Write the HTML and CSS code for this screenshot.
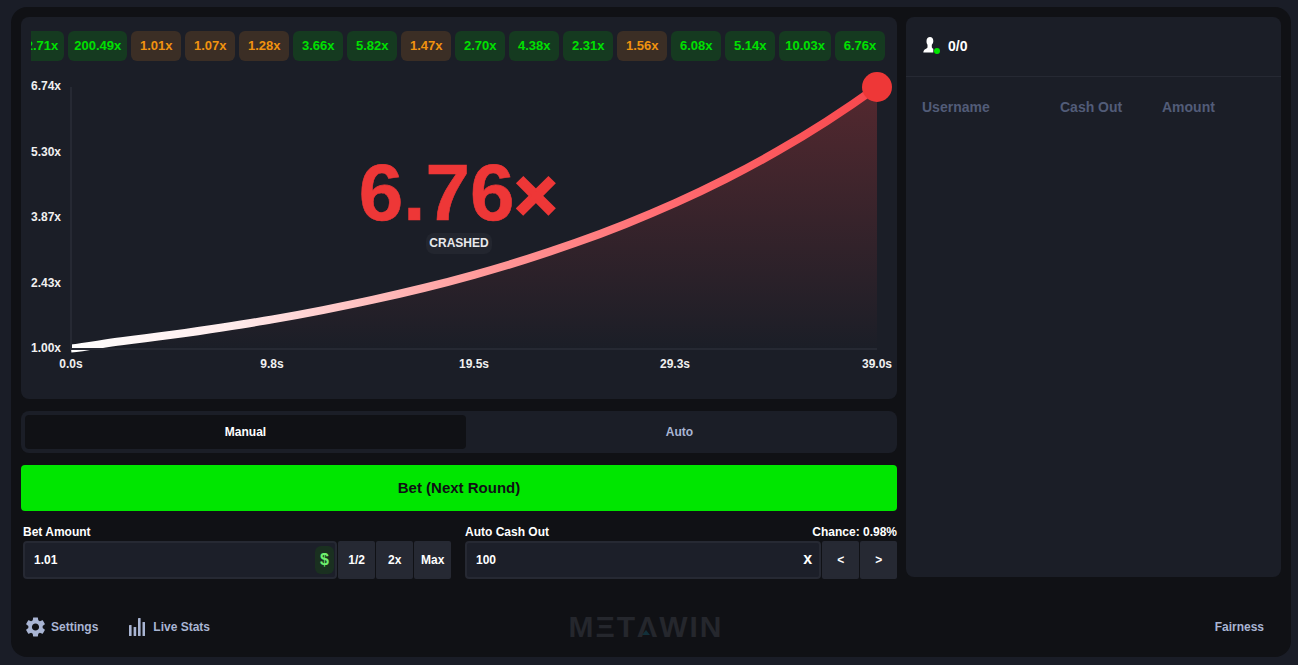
FILE: index.html
```html
<!DOCTYPE html>
<html lang="en">
<head>
  <meta charset="UTF-8" />
  <title>Crash</title>
  <meta name="viewport" content="width=device-width, initial-scale=1.0" />
  <link rel="stylesheet" href="styles.css">
</head>
<body>
  <div class="shell">
    <div class="main">
      <div class="game">
        <div class="chart">
          <div class="history">
            <div class="chip win">2.71x</div>
            <div class="chip win">200.49x</div>
            <div class="chip low">1.01x</div>
            <div class="chip low">1.07x</div>
            <div class="chip low">1.28x</div>
            <div class="chip win">3.66x</div>
            <div class="chip win">5.82x</div>
            <div class="chip low">1.47x</div>
            <div class="chip win">2.70x</div>
            <div class="chip win">4.38x</div>
            <div class="chip win">2.31x</div>
            <div class="chip low">1.56x</div>
            <div class="chip win">6.08x</div>
            <div class="chip win">5.14x</div>
            <div class="chip win">10.03x</div>
            <div class="chip win">6.76x</div>
          </div>

          <!-- viewBox uses the page coordinates of the chart area -->
          <svg class="plot" viewBox="21 71 876 328" width="876" height="328">
            <defs>
              <linearGradient id="area" gradientUnits="userSpaceOnUse" x1="0" y1="87" x2="0" y2="349">
                <stop offset="0" stop-color="#ef4444" stop-opacity="0.27" />
                <stop offset="1" stop-color="#ef4444" stop-opacity="0" />
              </linearGradient>
              <linearGradient id="line" gradientUnits="userSpaceOnUse" x1="71" y1="0" x2="877" y2="0">
                <stop offset="0" stop-color="#ffffff" />
                <stop offset="0.2" stop-color="#ffecec" />
                <stop offset="0.5" stop-color="#ff9c9c" />
                <stop offset="0.75" stop-color="#ff6a6f" />
                <stop offset="1" stop-color="#f8474c" />
              </linearGradient>
            </defs>
            <path class="area" d="M71 349V348.5C87.8 346.7 104.600 343.3 121.4 341.3S155 337.1 171.8 334.8 205.3 330.1 222.1 327.5 255.7 322.3 272.5 319.4 306.1 313.4 322.9 310.1 356.5 303.4 373.3 299.7 406.8 292.1 423.6 288 457.2 279.5 474 274.8 507.6 265.2 524.4 259.9 558 249 574.8 243.1 608.3 230.9 625.1 224.2 658.7 210.4 675.5 202.9 709.1 187.4 725.9 178.9 759.5 161.4 776.3 151.8 809.8 132.1 826.6 121.3 860.2 99.1 877 87V349Z" />
            <path class="curve" d="M71 348.5C87.8 346.7 104.600 343.3 121.4 341.3S155 337.1 171.8 334.8 205.3 330.1 222.1 327.5 255.7 322.3 272.5 319.4 306.1 313.4 322.9 310.1 356.5 303.4 373.3 299.7 406.8 292.1 423.6 288 457.2 279.5 474 274.8 507.6 265.2 524.4 259.9 558 249 574.8 243.1 608.3 230.9 625.1 224.2 658.7 210.4 675.5 202.9 709.1 187.4 725.9 178.9 759.5 161.4 776.3 151.8 809.8 132.1 826.6 121.3 860.2 99.1 877 87" />
            <path class="axis" d="M71 87V349H877" />
            <circle class="dot" cx="877" cy="87" r="15" />
            <g class="ticks-y">
              <text x="61" y="90">6.74x</text>
              <text x="61" y="156">5.30x</text>
              <text x="61" y="221">3.87x</text>
              <text x="61" y="287">2.43x</text>
              <text x="61" y="352">1.00x</text>
            </g>
            <g class="ticks-x">
              <text x="71" y="368">0.0s</text>
              <text x="272" y="368">9.8s</text>
              <text x="474" y="368">19.5s</text>
              <text x="675" y="368">29.3s</text>
              <text x="877" y="368">39.0s</text>
            </g>
          </svg>

          <div class="result">
            <div class="multiplier">6.76<span class="times">×</span></div>
            <div class="status">CRASHED</div>
          </div>
        </div>

        <div class="tabs">
          <div class="tab active">Manual</div>
          <div class="tab">Auto</div>
        </div>

        <button class="bet-btn">Bet (Next Round)</button>

        <div class="fields">
          <div class="field">
            <div class="field-label"><span>Bet Amount</span></div>
            <div class="field-row">
              <div class="input">
                <span>1.01</span>
                <span class="coin">$</span>
              </div>
              <button class="mini">1/2</button>
              <button class="mini">2x</button>
              <button class="mini">Max</button>
            </div>
          </div>
          <div class="field">
            <div class="field-label"><span>Auto Cash Out</span><span>Chance: 0.98%</span></div>
            <div class="field-row">
              <div class="input">
                <span>100</span>
                <span class="suffix">x</span>
              </div>
              <button class="mini">&lt;</button>
              <button class="mini">&gt;</button>
            </div>
          </div>
        </div>
      </div>

      <div class="players">
        <div class="players-head">
          <svg class="user-icon" viewBox="0 0 18 18" width="18" height="18">
            <path d="M7 0c2 0 3.300 1.700 3.300 3.900 0 1.600-.7 3-1.500 3.800v2.300c0 .8.7 1.300 1.500 1.800v3.700H.3c0-1.600.9-2.800 2.300-3.500 1-.5 1.900-1 1.900-2V7.700C3.800 6.900 3.500 5.500 3.500 3.900 3.500 1.700 5 0 7 0z" />
            <circle cx="14" cy="14" r="3" />
          </svg>
          <span>0/0</span>
        </div>
        <div class="players-cols">
          <span>Username</span>
          <span>Cash Out</span>
          <span>Amount</span>
        </div>
      </div>
    </div>

    <div class="footer">
      <div class="footer-left">
        <div class="footer-link">
          <svg viewBox="2.500 2 19 20" width="19" height="20">
            <path d="M19.14 12.94c.04-.3.06-.61.06-.94 0-.32-.02-.64-.07-.94l2.03-1.58c.18-.14.23-.41.12-.61l-1.92-3.32c-.12-.22-.37-.29-.59-.22l-2.39.96c-.5-.38-1.03-.7-1.62-.94l-.36-2.54c-.04-.24-.24-.41-.48-.41h-3.84c-.24 0-.43.17-.47.41l-.36 2.54c-.59.24-1.13.57-1.62.94l-2.39-.96c-.22-.08-.47 0-.59.22L2.74 8.87c-.12.21-.08.47.12.61l2.03 1.58c-.05.3-.09.63-.09.94s.02.64.07.94l-2.03 1.58c-.18.14-.23.41-.12.61l1.92 3.32c.12.22.37.29.59.22l2.39-.96c.5.38 1.03.7 1.62.94l.36 2.54c.05.24.24.41.48.41h3.84c.24 0 .44-.17.47-.41l.36-2.54c.59-.24 1.13-.56 1.62-.94l2.39.96c.22.08.47 0 .59-.22l1.92-3.32c.12-.22.07-.47-.12-.61l-2.01-1.58zM12 15.6c-1.98 0-3.6-1.62-3.6-3.6s1.62-3.6 3.6-3.6 3.6 1.62 3.6 3.6-1.62 3.6-3.6 3.6z" />
          </svg>
          <span>Settings</span>
        </div>
        <div class="footer-link">
          <svg viewBox="0 0 16 18" width="16" height="18">
            <rect x="0" y="7" width="2.600" height="11" rx="0.600" />
            <rect x="4.600" y="9" width="2.600" height="9" rx="0.600" />
            <rect x="9" y="0" width="2.600" height="18" rx="0.600" />
            <rect x="13.500" y="4" width="2.600" height="14" rx="0.600" />
          </svg>
          <span>Live Stats</span>
        </div>
      </div>
      <div class="logo">MΞTΛWIN</div>
      <div class="footer-right">Fairness</div>
    </div>
  </div>
</body>
</html>
```

FILE: styles.css
```css
:root {
  --page: #1a1d27;
  --shell: #101115;
  --panel: #1b1e27;
  --line: #262933;
  --mini: #262933;
  --link: #a9b5d3;
  --green: #00e600;
  --red: #ee3737;
}

* {
  box-sizing: border-box;
  margin: 0;
  padding: 0;
  font-family: "Liberation Sans", Arial, sans-serif;
}

html, body {
  height: 100%;
}

body {
  background: var(--page);
  padding: 7px 7px 8px 11px;
  overflow: hidden;
}

.shell {
  width: 1280px;
  height: 650px;
  background: var(--shell);
  border-radius: 16px;
  padding: 10px 10px 20px;
}

.main {
  display: grid;
  grid-template-columns: 876px 375px;
  column-gap: 9px;
  align-items: start;
}

/* chart */

.chart {
  position: relative;
  height: 382px;
  background: var(--panel);
  border-radius: 8px;
  padding-top: 14px;
}

.history {
  display: flex;
  justify-content: flex-end;
  gap: 4px;
  height: 30px;
  margin: 0 12px 0 10px;
  overflow: hidden;
}

.chip {
  flex: none;
  min-width: 50px;
  height: 30px;
  padding: 0 6px;
  border-radius: 6px;
  font-size: 13px;
  font-weight: bold;
  line-height: 30px;
  text-align: center;
}

/* oldest chip is sliding out of the row */
.chip:first-child {
  text-align: right;
}

.chip.win {
  background: #153a20;
  color: #00e000;
}

.chip.low {
  background: #3b2e25;
  color: #f0920f;
}

.plot {
  display: block;
  margin-top: 10px;
}

.area {
  fill: url(#area);
}

.curve {
  fill: none;
  stroke: url(#line);
  stroke-width: 8;
}

.axis {
  fill: none;
  stroke: #262933;
  stroke-width: 2;
}

.dot {
  fill: var(--red);
}

.plot text {
  fill: #f0f0f0;
  font-size: 12px;
  font-weight: bold;
}

.ticks-y text {
  text-anchor: end;
}

.ticks-x text {
  text-anchor: middle;
}

.result {
  position: absolute;
  top: 131px;
  left: 0;
  right: 0;
  display: flex;
  flex-direction: column;
  align-items: center;
  pointer-events: none;
}

.multiplier {
  height: 90px;
  margin-right: 2px;
  color: var(--red);
  font-size: 80px;
  font-weight: bold;
  line-height: 90px;
  -webkit-text-stroke: 0.6px var(--red);
}

.times {
  font-size: 73px;
  -webkit-text-stroke: 2.5px var(--red);
}

.status {
  margin-top: -5px;
  padding: 0 3.5px;
  height: 21px;
  background: #23262f;
  border-radius: 8px;
  color: #e8e9ec;
  font-size: 12px;
  font-weight: bold;
  line-height: 21px;
}

/* manual / auto */

.tabs {
  display: flex;
  height: 42px;
  margin-top: 12px;
  padding: 4px;
  background: var(--panel);
  border-radius: 8px;
}

.tab {
  flex: 1;
  color: var(--link);
  font-size: 12px;
  font-weight: bold;
  line-height: 34px;
  text-align: center;
}

.tab.active {
  flex: none;
  width: 441px;
  background: var(--shell);
  border-radius: 4px;
  color: #fff;
}

.bet-btn {
  display: block;
  width: 100%;
  height: 46px;
  margin-top: 12px;
  padding-bottom: 2px;
  background: var(--green);
  border: none;
  border-radius: 4px;
  color: #0f1014;
  font-size: 15px;
  font-weight: bold;
  cursor: pointer;
}

/* fields */

.fields {
  display: grid;
  grid-template-columns: 428px 432px;
  column-gap: 14px;
  margin: 14px 0 0 2px;
}

.field-label {
  display: flex;
  justify-content: space-between;
  height: 16px;
  color: #fff;
  font-size: 12px;
  font-weight: bold;
  line-height: 14px;
}

.field-row {
  display: flex;
  height: 38px;
}

.input {
  flex: 1;
  display: flex;
  align-items: center;
  justify-content: space-between;
  padding: 0 1px 0 9px;
  background: #1c1f29;
  border: 2px solid var(--line);
  border-radius: 4px;
  color: #fff;
  font-size: 12px;
  font-weight: bold;
}

.coin {
  width: 19px;
  height: 28px;
  background: #1a3020;
  border-radius: 6px;
  color: #6ef06e;
  font-size: 16px;
  line-height: 27px;
  text-align: center;
}

.suffix {
  margin: 0 6px 3px 0;
  font-size: 16px;
}

.mini {
  flex: none;
  width: 36.67px;
  margin-left: 1.33px;
  background: var(--mini);
  border: none;
  border-radius: 2px;
  color: #fff;
  font-size: 12px;
  font-weight: bold;
  cursor: pointer;
}

/* players */

.players {
  height: 560px;
  background: var(--panel);
  border-radius: 8px;
}

.players-head {
  display: flex;
  align-items: center;
  gap: 7px;
  height: 60px;
  padding: 0 0 1px 17px;
  border-bottom: 1px solid var(--line);
  color: #fff;
  font-size: 14px;
  font-weight: bold;
}

.user-icon path {
  fill: #fff;
}

.user-icon circle {
  fill: var(--green);
}

.players-cols {
  display: grid;
  grid-template-columns: 138px 102px 1fr;
  padding: 22px 16px 0;
  color: #525c78;
  font-size: 14px;
  font-weight: bold;
  line-height: 16px;
}

/* footer */

.footer {
  display: grid;
  grid-template-columns: 1fr auto 1fr;
  align-items: center;
  height: 20px;
  margin-top: 38px;
  padding: 0 17px 0 5px;
  color: var(--link);
  font-size: 12px;
  font-weight: bold;
}

.footer-left {
  display: flex;
  gap: 31px;
}

.footer-link {
  display: flex;
  align-items: center;
  gap: 6px;
}

.footer-link + .footer-link {
  gap: 8px;
}

.footer-link svg {
  fill: var(--link);
}

.logo {
  position: relative;
  margin-left: 2px;
  color: #25272d;
  font-size: 30px;
  letter-spacing: 2px;
  line-height: 20px;
}

/* small teal mark inside the logo's lambda */
.logo::after {
  content: "";
  position: absolute;
  left: 73px;
  top: 13px;
  border-left: 4px solid transparent;
  border-right: 4px solid transparent;
  border-bottom: 5px solid #12303a;
}

.footer-right {
  text-align: right;
}
```
